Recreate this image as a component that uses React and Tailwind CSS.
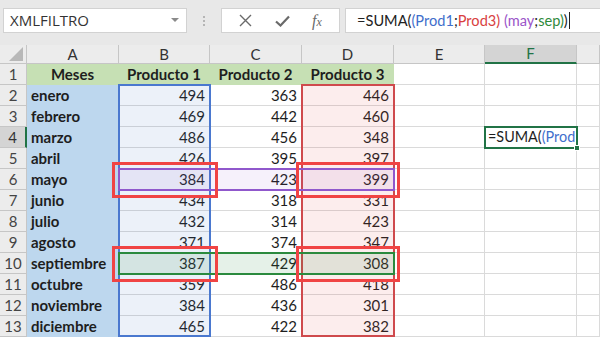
import React from 'react';

const months = ['enero', 'febrero', 'marzo', 'abril', 'mayo', 'junio', 'julio', 'agosto', 'septiembre', 'octubre', 'noviembre', 'diciembre'];
const p1 = [494, 469, 486, 426, 384, 434, 432, 371, 387, 359, 384, 465];
const p2 = [363, 442, 456, 395, 423, 318, 314, 374, 429, 486, 436, 422];
const p3 = [446, 460, 348, 397, 399, 331, 423, 347, 308, 418, 301, 382];

const colLetters = ['A', 'B', 'C', 'D', 'E', 'F', 'G'];
const cellFont = { fontFamily: 'Lato, "Liberation Sans", sans-serif' };

function Toolbar() {
  return (
    <div className="h-[45px] bg-[#e8e8e8] flex items-start pt-[8px]">
      <div className="ml-[3px] w-[184px] h-[25px] bg-white border border-[#d2d2d2] flex items-center justify-between pl-[6px] pr-[7px]">
        <span className="text-[15px] text-[#333]" style={{ fontFamily: '"Open Sans", "Noto Sans", sans-serif' }}>XMLFILTRO</span>
        <svg width="8" height="5" viewBox="0 0 8 5"><path d="M0 0h8L4 4z" fill="#8a8a8a" /></svg>
      </div>
      <div className="w-[34px] h-[25px] flex flex-col items-center justify-center gap-[2px]">
        <span className="w-[2px] h-[2px] bg-[#b5b5b5]" />
        <span className="w-[2px] h-[2px] bg-[#b5b5b5]" />
        <span className="w-[2px] h-[2px] bg-[#b5b5b5]" />
      </div>
      <div className="w-[119px] h-[25px] bg-white border border-[#d2d2d2] flex items-center justify-around px-[6px]">
        <svg width="13" height="13" viewBox="0 0 13 13"><path d="M1 1l11 11M12 1L1 12" stroke="#6a6a6a" strokeWidth="1.4" /></svg>
        <svg width="15" height="12" viewBox="0 0 15 12"><path d="M1 6.5l4.5 4L14 1.5" stroke="#6a6a6a" strokeWidth="2.2" fill="none" /></svg>
        <span className="text-[16px] italic text-[#6a6a6a] leading-none" style={{ fontFamily: '"Liberation Serif", serif' }}>f<span className="text-[12px]">x</span></span>
      </div>
      <div className="ml-[5px] flex-1 h-[25px] bg-white border border-[#d2d2d2] border-r-0 flex items-center pl-[11px]">
        <span className="text-[14.6px] text-[#222] whitespace-nowrap" style={cellFont}>
          =SUMA(<span className="text-[#3f6fcc]">(Prod1</span>;<span className="text-[#d9413f]">Prod3)</span> <span className="text-[#9b55c9]">(may</span>;<span className="text-[#2f8a3c]">sep)</span>)
        </span>
        <span className="ml-[1px] w-[1px] h-[17px] bg-[#222]" />
      </div>
    </div>
  );
}

function Box({ left, top, width, height, className }) {
  return <div className={`absolute pointer-events-none ${className}`} style={{ left, top, width, height }} />;
}

export default function App() {
  const rowTop = r => 19 + (r - 1) * 21;
  const cells = [];

  // header row
  cells.push(
    <div key="corner" className="bg-[#ececec] border-r border-b border-[#c6c6c6] flex items-end justify-end pr-[3px] pb-[2px]">
      <svg width="14" height="14" viewBox="0 0 14 14"><path d="M14 0v14H0z" fill="#b8b8b8" /></svg>
    </div>
  );
  colLetters.forEach(c => {
    const active = c === 'F';
    cells.push(
      <div key={'h' + c} className={`flex items-center justify-center text-[15px] border-r border-[#c6c6c6] ${active ? 'bg-[#d4d4d4] text-[#217346] border-b-2 border-b-[#217346]' : 'bg-[#ececec] text-[#333] border-b border-b-[#c6c6c6]'}`} style={cellFont}>
        {c === 'G' ? '' : c}
      </div>
    );
  });

  for (let r = 1; r <= 13; r++) {
    const activeRow = r === 4;
    cells.push(
      <div key={'r' + r} className={`flex items-center justify-center text-[15px] border-b border-[#c6c6c6] ${activeRow ? 'bg-[#d4d4d4] text-[#333] border-r-2 border-r-[#217346]' : 'bg-[#ececec] text-[#444] border-r border-r-[#c6c6c6]'}`} style={cellFont}>
        {r}
      </div>
    );
    colLetters.forEach((c, ci) => {
      let text = '';
      let cls = 'border-r border-b border-[#dadada] bg-white text-[15px]';
      let align = 'justify-end pr-[4px]';
      if (r === 1 && ci < 4) {
        text = ['Meses', 'Producto 1', 'Producto 2', 'Producto 3'][ci];
        cls = 'bg-[#c6e0b4] border-r border-b border-[#c6e0b4] font-bold text-[15px]';
        align = 'justify-center';
      } else if (r > 1 && ci === 0) {
        text = months[r - 2];
        cls = 'bg-[#bdd7ee] border-r border-b border-[#bdd7ee] font-bold text-[15px]';
        align = 'justify-start pl-[4px]';
      } else if (r > 1 && ci >= 1 && ci <= 3) {
        text = [p1, p2, p3][ci - 1][r - 2];
      } else if (r === 4 && c === 'F') {
        text = (
          <>=SUMA(<span className="text-[#3f6fcc]">(Prod</span></>
        );
        cls = 'border-r border-b border-[#dadada] bg-white text-[14.4px]';
        align = 'justify-start pl-[3px]';
      }
      cells.push(
        <div key={c + r} className={`flex items-center overflow-hidden whitespace-nowrap text-[#1e1e1e] ${cls} ${align}`} style={cellFont}>
          {text}
        </div>
      );
    });
  }

  return (
    <div className="w-[600px] h-[343px] bg-white overflow-hidden">
      <Toolbar />
      <div className="relative">
        <div className="grid grid-cols-[27px_92px_91px_92px_92px_91px_92px_1fr] grid-rows-[19px_repeat(13,21px)]">
          {cells}
        </div>

        {/* range highlights of the formula */}
        <Box left={118} top={rowTop(2) - 1} width={93} height={12 * 21 + 1} className="border-2 border-[#4a78cf] bg-[#4472c4]/10" />
        <Box left={301} top={rowTop(2) - 1} width={94} height={12 * 21 + 1} className="border-2 border-[#cf4a4d] bg-[#e05050]/10" />
        <Box left={118} top={rowTop(6) - 1} width={277} height={23} className="border-2 border-[#9058cc] bg-[#8a50c8]/8" />
        <Box left={118} top={rowTop(10) - 1} width={277} height={23} className="border-2 border-[#2b8a3e] bg-[#2b8a3e]/12" />

        {/* active cell F4 */}
        <Box left={484} top={rowTop(4) - 1} width={94} height={23} className="border-2 border-[#217346]" />
        <Box left={574} top={rowTop(4) + 18} width={6} height={6} className="bg-[#217346] border border-white" />

        {/* annotation boxes */}
        <Box left={112} top={rowTop(6) - 7} width={106} height={36} className="border-[3px] border-[#f04444]" />
        <Box left={296} top={rowTop(6) - 7} width={104} height={36} className="border-[3px] border-[#f04444]" />
        <Box left={112} top={rowTop(10) - 7} width={106} height={36} className="border-[3px] border-[#f04444]" />
        <Box left={296} top={rowTop(10) - 7} width={104} height={36} className="border-[3px] border-[#f04444]" />
      </div>
    </div>
  );
}
